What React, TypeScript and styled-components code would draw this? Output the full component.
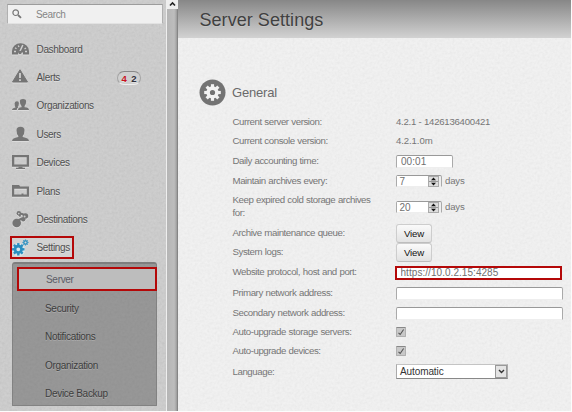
import React from "react";
import styled, { createGlobalStyle, css } from "styled-components";

const grain = (alpha: number) =>
  `url("data:image/svg+xml,${encodeURIComponent(
    `<svg xmlns='http://www.w3.org/2000/svg' width='160' height='160'><filter id='n'><feTurbulence type='fractalNoise' baseFrequency='.4' numOctaves='2' stitchTiles='stitch'/><feColorMatrix type='saturate' values='0'/><feComponentTransfer><feFuncA type='linear' slope='0' intercept='${alpha}'/></feComponentTransfer></filter><rect width='160' height='160' filter='url(#n)'/></svg>`
  )}")`;

const Global = createGlobalStyle`
  * { box-sizing: border-box; }
  body { margin: 0; background: #fff; font-family: "Liberation Sans", Arial, sans-serif; }
  button, input { font-family: inherit; }
`;

const Page = styled.div`
  display: flex;
  width: 572px;
  height: 412px;
  overflow: hidden;
  background: #fcfcfc;
  padding: 0 1px 1px 0;
`;

const Sidebar = styled.aside`
  width: 166px;
  flex: none;
  padding-top: 4px;
  background-color: #cdcdcd;
  background-image: ${grain(0.12)};
`;

const SearchBox = styled.div`
  display: flex;
  align-items: center;
  width: 156px;
  height: 20px;
  margin-left: 7px;
  padding-left: 4px;
  border: 1px solid #b0b0b0;
  border-top-color: #9c9c9c;
  border-bottom-color: #e2e2e2;
  background: #f0f0f0;
  svg { display: block; }
`;

const SearchInput = styled.input`
  width: 110px;
  margin-left: 14px;
  padding: 0;
  border: 0;
  outline: 0;
  background: transparent;
  font-size: 10px;
  letter-spacing: -0.35px;
  color: #777;
  &::placeholder { color: #858585; opacity: 1; }
`;

const Nav = styled.nav`
  display: grid;
  grid-auto-rows: 28.4px;
  margin-top: 11px;
`;

const NavItem = styled.a<{ $marked?: boolean }>`
  display: flex;
  align-items: center;
  align-self: center;
  height: 23px;
  width: ${(p) => (p.$marked ? "64px" : "150px")};
  margin-left: 10px;
  padding-left: ${(p) => (p.$marked ? "0" : "2px")};
  border: ${(p) => (p.$marked ? "2px solid #b40808" : "0")};
  background: ${(p) => (p.$marked ? "#d2d2d2" : "none")};
  color: #505050;
  font-size: 10px;
  letter-spacing: -0.34px;
  white-space: nowrap;
  text-shadow: 0 1px 0 #dedede;
  svg { flex: none; display: block; filter: drop-shadow(0 1px 0 #dcdcdc); }
`;

const NavText = styled.span`
  width: 80px;
  margin-left: 7.5px;
`;

const Badge = styled.span`
  display: flex;
  align-items: center;
  justify-content: space-between;
  width: 24px;
  height: 14px;
  padding: 1px 3px 0 4px;
  border: 1px solid #a4a4a4;
  border-top-color: #888;
  border-bottom-color: #eee;
  border-radius: 7px;
  background: #cfcfcf;
  font-size: 9.5px;
  font-weight: bold;
  letter-spacing: 0;
  color: #30303a;
`;

const Critical = styled.span`
  color: #c8101c;
`;

const Submenu = styled.div`
  width: 145px;
  height: 144px;
  margin: 0 0 0 12px;
  padding: 3px 0 0 4px;
  border: 1px solid #828282;
  border-top: 2px solid #7e7e7e;
  border-radius: 3px 3px 1px 1px;
  background-color: #939393;
  background-image: ${grain(0.07)};
`;

const SubItem = styled.a<{ $active?: boolean }>`
  display: flex;
  align-items: center;
  height: 28.4px;
  padding-left: 28px;
  font-size: 10px;
  letter-spacing: -0.3px;
  color: #3e3e3e;
  text-shadow: 0 1px 0 #ababab;
  ${(p) =>
    p.$active &&
    css`
      height: 24px;
      width: 140px;
      margin-bottom: 3px;
      padding-left: 27px;
      border: 2px solid #b40808;
      background: #bdbdbd;
      color: #5c5c66;
      text-shadow: none;
    `}
`;

const Scrollbar = styled.div`
  width: 12px;
  flex: none;
  border-left: 1px solid #eee;
  background: linear-gradient(90deg, #b5b5b5, #bdbdbd 65%, #a5a5a5 85%, #777);
`;

const ScrollUp = styled.div`
  display: flex;
  justify-content: center;
  width: 11px;
  height: 9px;
  background: #eee;
`;

const Main = styled.main`
  flex: 1;
  background-color: #f4f4f4;
  background-image: ${grain(0.1)};
`;

const Header = styled.header`
  height: 38px;
  padding: 9px 0 0 21.5px;
  background: linear-gradient(#878787, #d2d2d2);
  h1 {
    margin: 0;
    font-size: 18px;
    line-height: 22px;
    font-weight: normal;
    letter-spacing: 0.05px;
    color: #404040;
    text-shadow: 0 1px 0 #c6c6c6;
  }
`;

const SectionTitle = styled.div`
  display: flex;
  align-items: center;
  height: 28px;
  margin: 40px 0 6px 21px;
  gap: 6px;
  h2 { margin: 1px 0 0; font-size: 13px; letter-spacing: -0.2px; font-weight: normal; color: #6a6a6a; }
`;

const Form = styled.div`
  display: grid;
  grid-template-rows: 20px 18px 22px 18px 34px 19px 19px 21px 20px 20px 18px 20px 22px;
  margin-left: 54px;
`;

const Row = styled.div`
  display: grid;
  grid-template-columns: 164px 170px;
  align-items: center;
`;

const Label = styled.label`
  width: 148px;
  padding: 0 0 1.5px 0.5px;
  font-size: 9.7px;
  line-height: 13px;
  letter-spacing: -0.44px;
  word-spacing: 0.4px;
  color: #767676;
`;

const Value = styled.span<{ $track?: number }>`
  padding-bottom: 1.5px;
  font-size: 9.6px;
  letter-spacing: ${(p) => p.$track ?? 0}px;
  color: #767676;
`;

const Control = styled.div`
  display: flex;
  align-items: center;
  min-width: 0;
`;

const TextField = styled.input<{ $w: number; $marked?: boolean }>`
  width: ${(p) => p.$w}px;
  height: 13px;
  padding: 0 0 0 4px;
  outline: 0;
  border: 1px solid #aaa;
  border-top-color: #999;
  border-bottom-color: #eee;
  border-radius: 2px 2px 0 0;
  background: #fff;
  font-size: 10px;
  letter-spacing: 0.05px;
  color: #707070;
  ${(p) =>
    p.$marked &&
    css`
      height: 14px;
      margin-left: -1px;
      padding-left: 3.5px;
      border: 2px solid #b40808;
      border-radius: 0;
    `}
`;

const Stepper = styled.div`
  display: flex;
  width: 46px;
  height: 12px;
  margin-right: 3px;
  border: 1px solid #aaa;
  border-top-color: #999;
  border-bottom-color: #eee;
  border-radius: 2px 2px 0 0;
  background: #eee;
`;

const StepperValue = styled.span`
  width: 31px;
  padding-left: 2.5px;
  background: #fff;
  font-size: 10px;
  line-height: 11px;
  color: #707070;
`;

const StepperArrows = styled.span`
  width: 11px;
  height: 11px;
  border: 1px solid #aaa;
  background: #ddd;
  svg { display: block; }
`;

const ViewButton = styled.button`
  width: 36px;
  height: 19px;
  padding: 0;
  border: 1px solid #cdcdcd;
  border-bottom-color: #bdbdbd;
  border-radius: 3px;
  background: linear-gradient(#fafafa, #e2e2e2);
  font-size: 9.6px;
  letter-spacing: -0.1px;
  color: #111;
`;

const Check = styled.span`
  display: flex;
  width: 10px;
  height: 10px;
  border: 1px solid #b0b0b0;
  border-top-color: #888;
  border-radius: 1px;
  background: #c8c8c8;
`;

const Select = styled.div`
  display: flex;
  align-items: center;
  justify-content: space-between;
  width: 112px;
  height: 15px;
  margin-top: -1px;
  padding-left: 3px;
  border: 1px solid #aaa;
  border-top-color: #c4c4c4;
  border-bottom-color: #888;
  background: #fff;
  font-size: 10px;
  letter-spacing: -0.1px;
  color: #333;
`;

const SelectArrow = styled.span`
  display: flex;
  align-items: center;
  justify-content: center;
  width: 12px;
  height: 13px;
  border: 1px solid #999;
  background: #e4e4e4;
`;

const Icon = ({ children }: { children: React.ReactNode }) => (
  <svg width="17" height="17" viewBox="0 0 17 17" fill="#757575">{children}</svg>
);

const Gear = ({ cx, cy, r, teeth, fill, hole }: { cx: number; cy: number; r: number; teeth: number; fill: string; hole: number }) => (
  <g transform={`translate(${cx} ${cy})`}>
    <circle r={(hole + r * 0.74) / 2} fill="none" stroke={fill} strokeWidth={r * 0.74 - hole} />
    {Array.from({ length: teeth }, (_, i) => (
      <rect key={i} x={-r * 0.19} y={-r} width={r * 0.38} height={r * 0.4} fill={fill} transform={`rotate(${(360 / teeth) * i})`} />
    ))}
  </g>
);

const DashboardIcon = () => (
  <Icon>
    <path d="M0 13.5V10A8.5 7.8 0 0 1 17 10V13.5H11V11.5H6V13.5Z" />
    <path d="M2 10.5H4M3 6.8l1.5 1M6.2 4.5l.8 1.5M13 10.5h2M12.5 8l1.5-1" stroke="#cfcfcf" strokeWidth="1.3" />
    <path d="M7.5 11.3L10.8 4" stroke="#d2d2d2" strokeWidth="1.5" />
    <circle cx="8" cy="11.5" r="1.7" />
  </Icon>
);
const AlertIcon = () => (
  <Icon>
    <path d="M8 .8L15.5 13H.5Z" stroke="#757575" strokeLinejoin="round" />
    <path d="M8 4v5M8 10.3v1.7" stroke="#d5d5d5" strokeWidth="1.7" />
  </Icon>
);
const GroupIcon = () => (
  <Icon>
    <path d="M7.9 4.2Q7.9 2 11 2T14.1 4.2Q14.1 8 12.6 9V10.2Q17 10.5 17 13H6Q6 10.5 9.5 10.2V9Q7.9 8 7.9 4.2Z" />
    <path d="M2.6 6.2Q2.8 4.3 5 4.3T6.9 6.5Q6.9 9 5.6 10L6.4 10.5Q4.7 11.2 4.7 13H0Q0 11.2 3.5 10.5Q2.5 9 2.6 6.2Z" />
  </Icon>
);
const UserIcon = () => (
  <Icon><path d="M4.5 4.3Q4.5 .7 8.5 .7T12.5 4.3Q12.5 8.5 10.7 10V11Q17 12 17 15H0Q0 12 6.3 11V10Q4.5 8.5 4.5 4.3Z" /></Icon>
);
const DeviceIcon = () => (
  <Icon>
    <path fillRule="evenodd" d="M0 1H17V12.7H0ZM2.3 3.2V10.5H14.7V3.2Z" />
    <path d="M6.5 12.7h4v1H13V15H4V13.7H6.5Z" />
  </Icon>
);
const PlanIcon = () => (
  <Icon><path fillRule="evenodd" d="M0 2H7L8.2 3.5H17V13.7H0ZM2.2 5.7V11.5H9.5V10.5H11.5V11.5H14.8V5.7Z" /></Icon>
);
const DestinationIcon = () => (
  <Icon>
    <circle cx="4.7" cy="12" r="4.3" />
    <path d="M6.5 2.5Q9 2 13.5 4.5M6.5 3L8.5 5.5M5 10L10 7.5" fill="none" stroke="#757575" strokeWidth="2" />
    <circle cx="6.8" cy="2.3" r="2.2" /><circle cx="13.4" cy="5" r="2.8" /><circle cx="11.2" cy="8.3" r="2.2" />
    <circle cx="12.6" cy="5.4" r="1" fill="#ccc" /><circle cx="6.8" cy="2.6" r=".8" fill="#ccc" />
  </Icon>
);
const SettingsIcon = () => (
  <Icon>
    <circle cx="6.5" cy="10.5" r="6.5" fill="#d8e6ec" />
    <Gear cx={6.3} cy={10.3} r={6.2} teeth={8} fill="#2b8fc0" hole={1.9} />
    <Gear cx={13.5} cy={3.5} r={3} teeth={8} fill="#2b8fc0" hole={1} />
  </Icon>
);

const navItems = [
  { name: "Dashboard", icon: DashboardIcon },
  { name: "Alerts", icon: AlertIcon, badge: true },
  { name: "Organizations", icon: GroupIcon },
  { name: "Users", icon: UserIcon },
  { name: "Devices", icon: DeviceIcon },
  { name: "Plans", icon: PlanIcon },
  { name: "Destinations", icon: DestinationIcon },
  { name: "Settings", icon: SettingsIcon, marked: true },
];

const NumberField = ({ value }: { value: string }) => (
  <Control>
    <Stepper>
      <StepperValue>{value}</StepperValue>
      <StepperArrows>
        <svg width="9" height="9" viewBox="0 0 9 9">
          <path d="M0 4.5H9" stroke="#999" />
          <path d="M4.5 .5L7 3.3H2ZM4.5 8.5L7 5.7H2Z" fill="#111" />
        </svg>
      </StepperArrows>
    </Stepper>
    <Value $track={-0.15}>days</Value>
  </Control>
);

const Checked = () => (
  <Check>
    <svg width="8" height="8" viewBox="0 0 8 8"><path d="M1.5 4.8L3.2 6.5L6.6 1.5" fill="none" stroke="#555" strokeWidth="1.1" /></svg>
  </Check>
);

const fields: { label: string; control: React.ReactNode }[] = [
  { label: "Current server version:", control: <Value $track={-0.24}>4.2.1 - 1426136400421</Value> },
  { label: "Current console version:", control: <Value $track={-0.1}>4.2.1.0m</Value> },
  { label: "Daily accounting time:", control: <TextField $w={57} defaultValue="00:01" /> },
  { label: "Maintain archives every:", control: <NumberField value="7" /> },
  { label: "Keep expired cold storage archives for:", control: <NumberField value="20" /> },
  { label: "Archive maintenance queue:", control: <ViewButton>View</ViewButton> },
  { label: "System logs:", control: <ViewButton>View</ViewButton> },
  { label: "Website protocol, host and port:", control: <TextField $w={167} $marked defaultValue="https://10.0.2.15:4285" /> },
  { label: "Primary network address:", control: <TextField $w={167} /> },
  { label: "Secondary network address:", control: <TextField $w={167} /> },
  { label: "Auto-upgrade storage servers:", control: <Checked /> },
  { label: "Auto-upgrade devices:", control: <Checked /> },
  {
    label: "Language:",
    control: (
      <Select>
        Automatic
        <SelectArrow>
          <svg width="7" height="5" viewBox="0 0 7 5"><path d="M1 1L3.5 3.5L6 1" fill="none" stroke="#333" strokeWidth="1.4" /></svg>
        </SelectArrow>
      </Select>
    ),
  },
];

export default function App() {
  return (
    <>
      <Global />
      <Page>
        <Sidebar>
          <SearchBox>
            <svg width="10" height="10" viewBox="0 0 10 10" fill="none" stroke="#777"><circle cx="3.7" cy="3.7" r="2.8" strokeWidth="1.2" /><path d="M6 6L9 8.8" strokeWidth="1.8" /></svg>
            <SearchInput placeholder="Search" />
          </SearchBox>
          <Nav>
            {navItems.map(({ name, icon: Glyph, badge, marked }) => (
              <NavItem key={name} $marked={marked}>
                <Glyph />
                <NavText>{name}</NavText>
                {badge && <Badge><Critical>4</Critical><span>2</span></Badge>}
              </NavItem>
            ))}
          </Nav>
          <Submenu>
            {["Server", "Security", "Notifications", "Organization", "Device Backup"].map((name, i) => (
              <SubItem key={name} $active={i === 0}>{name}</SubItem>
            ))}
          </Submenu>
        </Sidebar>
        <Scrollbar>
          <ScrollUp>
            <svg width="9" height="8" viewBox="0 0 9 8"><path d="M2 5.5L4.5 3L7 5.5" fill="none" stroke="#222" strokeWidth="1.6" /></svg>
          </ScrollUp>
        </Scrollbar>
        <Main>
          <Header><h1>Server Settings</h1></Header>
          <SectionTitle>
            <svg width="27" height="27" viewBox="0 0 27 27">
              <circle cx="13.5" cy="13.5" r="13" fill="#737373" />
              <Gear cx={13.5} cy={13.5} r={8.3} teeth={8} fill="#f2f2f2" hole={2.6} />
            </svg>
            <h2>General</h2>
          </SectionTitle>
          <Form>
            {fields.map((f) => (
              <Row key={f.label}>
                <Label>{f.label}</Label>
                {f.control}
              </Row>
            ))}
          </Form>
        </Main>
      </Page>
    </>
  );
}
